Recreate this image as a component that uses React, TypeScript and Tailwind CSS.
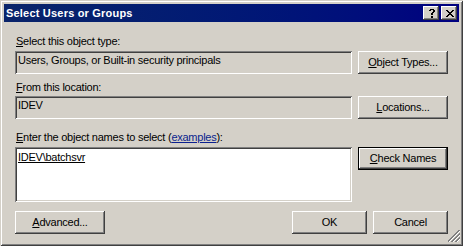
import React from "react";

const raised =
  "shadow-[inset_-1px_-1px_0_#404040,inset_1px_1px_0_#ffffff,inset_-2px_-2px_0_#808080,inset_2px_2px_0_#d4d0c8]";

function Btn({ children, w, def }: { children: React.ReactNode; w: string; def?: boolean }) {
  return (
    <div
      className={
        (def
          ? "shadow-[inset_0_0_0_1px_#000000,inset_-2px_-2px_0_#404040,inset_2px_2px_0_#ffffff,inset_-3px_-3px_0_#808080] "
          : "shadow-[inset_-1px_-1px_0_#404040,inset_1px_1px_0_#ffffff,inset_-2px_-2px_0_#808080,inset_2px_2px_0_#d4d0c8] ") +
        w +
        " h-[23px] shrink-0 flex items-center justify-center bg-[#d4d0c8]"
      }
    >
      <span className="pb-[1px]">{children}</span>
    </div>
  );
}

function Grip() {
  const rects: React.ReactNode[] = [];
  for (let k = 1; k <= 12; k++) {
    const m = (k - 2) % 4;
    if (k < 2 || m === 3) continue;
    const color = m === 0 ? "#ffffff" : "#808080";
    const s = 22 - k;
    for (let x = 0; x < 12; x++) {
      const y = s - x;
      if (y >= 0 && y < 12) rects.push(<rect key={k + "-" + x} x={x} y={y} width={1} height={1} fill={color} />);
    }
  }
  return (
    <svg width="12" height="12" viewBox="0 0 12 12" shapeRendering="crispEdges" className="absolute right-[3px] bottom-[4px]">
      {rects}
    </svg>
  );
}

function PixelIcon({ rows }: { rows: string[] }) {
  const w = rows[0].length;
  const h = rows.length;
  return (
    <svg width={w} height={h} viewBox={`0 0 ${w} ${h}`} shapeRendering="crispEdges">
      {rows.flatMap((r, y) =>
        r.split("").map((c, x) => (c === "X" ? <rect key={x + "_" + y} x={x} y={y} width={1} height={1} fill="#000" /> : null))
      )}
    </svg>
  );
}

const helpRows = [".XXXX.", "XX..XX", "....XX", "...XX.", "..XX..", "..XX..", "......", "..XX..", "..XX.."];
const closeRows = ["XX....XX", ".XX..XX.", "..XXXX..", "...XX...", "..XXXX..", ".XX..XX.", "XX....XX"];

const sunken =
  "shadow-[inset_1px_1px_0_#808080,inset_-1px_-1px_0_#ffffff,inset_2px_2px_0_#404040,inset_-2px_-2px_0_#d4d0c8]";

export default function App() {
  return (
    <div className="relative w-[463px] h-[246px] bg-[#d4d0c8] shadow-[inset_1px_1px_0_#d4d0c8,inset_-1px_-1px_0_#404040,inset_2px_2px_0_#ffffff,inset_-2px_-2px_0_#808080] p-[4px] flex flex-col font-['Liberation_Sans',Arial,sans-serif] text-[11px] leading-[13px] tracking-[-0.25px] text-black overflow-hidden">
      <div className="h-[18px] shrink-0 flex items-center bg-linear-to-r from-[#0a246a] to-[#000080]">
        <span className="pl-[2px] font-bold text-white tracking-[0.2px]">Select Users or Groups</span>
        <div className="ml-auto flex gap-[2px] pr-[2px]">
          <div className={raised + " w-[16px] h-[14px] bg-[#d4d0c8] flex items-center justify-center pl-[1px]"}>
            <PixelIcon rows={helpRows} />
          </div>
          <div className={raised + " w-[16px] h-[14px] bg-[#d4d0c8] flex items-center justify-center pl-[1px]"}>
            <PixelIcon rows={closeRows} />
          </div>
        </div>
      </div>

      <div className="flex-1 flex flex-col px-[11px]">
        <div className="mt-[13px] pl-[1px] h-[13px]">
          <span className="underline">S</span>elect this object type:
        </div>
        <div className="mt-[3px] flex gap-[6px]">
          <div className={sunken + " w-[337px] h-[23px] pt-[3px] pl-[3px]"}>
            Users, Groups, or Built-in security principals
          </div>
          <Btn w="w-[90px]">
            <span className="underline">O</span>bject Types...
          </Btn>
        </div>

        <div className="mt-[7px] pl-[1px] h-[13px]">
          <span className="underline">F</span>rom this location:
        </div>
        <div className="mt-[2px] flex gap-[6px]">
          <div className={sunken + " w-[337px] h-[23px] pt-[3px] pl-[3px]"}>IDEV</div>
          <Btn w="w-[90px]">
            <span className="underline">L</span>ocations...
          </Btn>
        </div>

        <div className="mt-[12px] pl-[1px] h-[13px]">
          <span className="underline">E</span>nter the object names to select (
          <span className="underline text-[#0a1f8f]">examples</span>):
        </div>
        <div className="mt-[3px] flex gap-[6px] items-start">
          <div className={sunken + " w-[337px] h-[55px] bg-white pt-[4px] pl-[3px]"}>
            <span className="underline">IDEV\batchsvr</span>
          </div>
          <Btn w="w-[90px]" def>
            <span className="underline">C</span>heck Names
          </Btn>
        </div>

        <div className="mt-[9px] flex gap-[6px]">
          <Btn w="w-[90px]">
            <span className="underline">A</span>dvanced...
          </Btn>
          <div className="ml-auto flex gap-[6px]">
            <Btn w="w-[75px]">OK</Btn>
            <Btn w="w-[75px]">Cancel</Btn>
          </div>
        </div>
      </div>
      <Grip />
    </div>
  );
}
